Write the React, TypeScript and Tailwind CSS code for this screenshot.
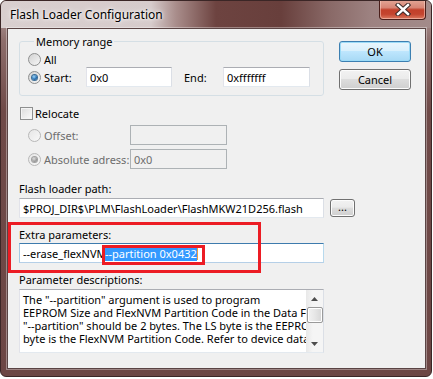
import React from "react";

function Radio({ checked, disabled }: { checked?: boolean; disabled?: boolean }) {
  return (
    <span
      className={
        "relative inline-block w-[13px] h-[13px] shrink-0 rounded-full border " +
        (disabled
          ? "border-[#b8b8b8] bg-[linear-gradient(135deg,#e6e6e6,#f8f8f8)]"
          : "border-[#8e8f8f] bg-[linear-gradient(135deg,#d2d2d2,#f6f6f6)]")
      }
    >
      {checked && !disabled && (
        <span className="absolute left-[3px] top-[3px] w-[5px] h-[5px] rounded-full bg-[radial-gradient(circle_at_40%_35%,#9fd8fa,#2a72b5_55%,#0d3f6f)] shadow-[0_0_0_1px_#3b6d96]" />
      )}
      {checked && disabled && (
        <span className="absolute left-[3px] top-[3px] w-[5px] h-[5px] rounded-full bg-[radial-gradient(circle_at_40%_35%,#e0e0e0,#9a9a9a_60%,#7a7a7a)] shadow-[0_0_0_1px_#a0a0a0]" />
      )}
    </span>
  );
}

function TextBox({
  children,
  width,
  disabled,
}: {
  children?: React.ReactNode;
  width: string;
  disabled?: boolean;
}) {
  return (
    <div
      className={
        width +
        " h-[20px] shrink-0 flex items-center pl-[3px] whitespace-nowrap overflow-hidden border " +
        (disabled
          ? "bg-[#f0f0f0] border-[#adb2b5] text-[#6d6d6d]"
          : "bg-white border-[#e2e3ea] border-t-[#abadb3] border-r-[#dbdfe6] border-b-[#e3e9ef] text-black")
      }
    >
      {children}
    </div>
  );
}

function Button({ children, className, def }: { children: React.ReactNode; className: string; def?: boolean }) {
  return (
    <div
      className={
        className +
        " flex items-center justify-center rounded-[3px] border " +
        (def
          ? "border-[#3c7fb1] bg-[linear-gradient(to_bottom,#eaf6fd_0%,#d9f0fc_45%,#bee6fd_50%,#a7d9f5_100%)] shadow-[inset_0_0_0_1px_#9cdbf7]"
          : "border-[#707070] bg-[linear-gradient(to_bottom,#f2f2f2_0%,#ebebeb_45%,#dddddd_50%,#cfcfcf_100%)] shadow-[inset_0_0_0_1px_#fcfcfc]")
      }
    >
      {children}
    </div>
  );
}

export default function App() {
  return (
    <div className="w-[433px] h-[379px] bg-white [font-family:'Noto_Sans','Liberation_Sans',sans-serif] text-[11px] leading-[15px] text-black">
      <div className="relative w-[432px] h-[377px] rounded-[6px] border border-[#3b2626] bg-[linear-gradient(to_bottom,#b9a6a5_0px,#8d6d6b_40px,#6f4a48_110px,#6c4644_100%)] flex flex-col pl-[6px] pr-[5px] pb-[7px] overflow-hidden">
        {/* title bar */}
        <div className="-ml-[6px] -mr-[5px] h-[27px] shrink-0 flex items-start bg-[linear-gradient(to_right,#d9cfcf_0px,#d6cbcb_150px,#a98d8b_175px,#6d4340_215px,#683f3c_280px,#8a6a68_330px,#9d8281_370px,#a38b8a_432px)] rounded-t-[5px]">
          <div className="pl-[9px] pt-[5px] text-[12px] leading-[17px] text-black [text-shadow:0_0_6px_#ffffff,0_0_3px_#ffffff]">
            Flash Loader Configuration
          </div>
          <div className="ml-auto mr-[5px] -mt-[1px] w-[47px] h-[20px] rounded-b-[4px] border border-t-0 border-[#4a1e1a] bg-[linear-gradient(to_bottom,#e3a797_0%,#d78575_40%,#c2402a_52%,#c4452f_75%,#dc7a60_100%)] shadow-[inset_0_0_0_1px_rgba(255,220,210,0.5)] flex items-center justify-center">
            <svg width="16" height="13" viewBox="0 0 16 13">
              <path d="M3 2 L13 11 M13 2 L3 11" stroke="#3b2a28" strokeWidth="4.4" strokeLinecap="square" fill="none" />
              <path d="M3 2 L13 11 M13 2 L3 11" stroke="#ffffff" strokeWidth="2.4" strokeLinecap="square" fill="none" />
            </svg>
          </div>
        </div>

        {/* client area */}
        <div className="flex-1 bg-[#f0f0f0] border border-[#5a4444] shadow-[0_0_0_1px_rgba(255,255,255,0.35)] flex flex-col pl-[11px] whitespace-nowrap">
          {/* top row */}
          <div className="flex mt-[5px]">
            <fieldset className="w-[305px] border border-[#d5dfe5] rounded-[3px] pl-[8px] pb-[8px] pt-[2px]">
              <legend className="ml-[6px] px-[2px] leading-[15px]">Memory range</legend>
              <div className="flex items-center h-[16px] gap-[3px]">
                <Radio />
                <span>All</span>
              </div>
              <div className="flex items-center h-[20px]">
                <Radio checked />
                <span className="ml-[3px] w-[42px]">Start:</span>
                <TextBox width="w-[86px]">0x0</TextBox>
                <span className="ml-[12px] w-[39px]">End:</span>
                <TextBox width="w-[87px]">0xfffffff</TextBox>
              </div>
            </fieldset>
            <div className="ml-[15px] mt-[7px] flex flex-col gap-[7px]">
              <Button className="w-[72px] h-[21px]" def>
                OK
              </Button>
              <Button className="w-[72px] h-[21px]">Cancel</Button>
            </div>
          </div>

          {/* relocate */}
          <div className="flex items-center h-[15px] mt-[10px] ml-[1px] gap-[2px]">
            <span className="w-[13px] h-[13px] border border-[#8e8f8f] bg-[linear-gradient(135deg,#dcdcdc,#fbfbfb)] shadow-[inset_0_0_0_1px_#f4f4f4]" />
            <span>Relocate</span>
          </div>
          <div className="flex items-center h-[20px] mt-[4px] ml-[9px] text-[#6d6d6d]">
            <Radio disabled />
            <span className="ml-[3px] w-[86px]">Offset:</span>
            <TextBox width="w-[97px]" disabled />
          </div>
          <div className="flex items-center h-[20px] mt-[4px] ml-[9px] text-[#6d6d6d]">
            <Radio disabled checked />
            <span className="ml-[3px] w-[86px]">Absolute adress:</span>
            <TextBox width="w-[97px]" disabled>
              0x0
            </TextBox>
          </div>

          <div className="mt-[12px] h-[15px]">Flash loader path:</div>
          <div className="flex items-start mt-[2px]">
            <TextBox width="w-[305px]">$PROJ_DIR$\PLM\FlashLoader\FlashMKW21D256.flash</TextBox>
            <Button className="ml-[6px] mt-[1px] w-[25px] h-[18px] text-[11px] leading-[10px] pb-[2px]">...</Button>
          </div>

          <div className="mt-[9px] h-[15px]">Extra parameters:</div>
          <div className="mt-[1px] w-[305px] h-[20px] flex items-center pl-[3px] whitespace-nowrap overflow-hidden bg-white border border-[#a4c9e3] border-t-[#3d7bad] border-r-[#b7d9ed] border-b-[#b5cfe7]">
            <span className="w-[81px] shrink-0 overflow-hidden">--erase_flexNVM</span>
            <span className="w-[93px] shrink-0 overflow-hidden bg-[#3399ff] text-white h-[15px] leading-[15px] pl-[1px]">--partition 0x0432</span>
            <span className="w-[1px] h-[14px] bg-[#f0a040]" />
          </div>

          <div className="mt-[9px] h-[15px]">Parameter descriptions:</div>
          <div className="mt-[2px] w-[305px] h-[64px] flex bg-white border border-[#e2e3ea] border-t-[#abadb3] border-r-[#dbdfe6] border-b-[#e3e9ef]">
            <div className="flex-1 overflow-hidden pl-[3px] pt-[3px] leading-[13px] whitespace-nowrap">
              <div>The "--partition" argument is used to program</div>
              <div>EEPROM Size and FlexNVM Partition Code in the Data Flash</div>
              <div>"--partition" should be 2 bytes. The LS byte is the EEPROM</div>
              <div>byte is the FlexNVM Partition Code. Refer to device data sheet</div>
            </div>
            <div className="w-[17px] shrink-0 bg-[linear-gradient(to_right,#e8e8e8,#f5f5f5_40%,#f5f5f5)] flex flex-col items-center">
              <div className="h-[17px] flex items-center justify-center">
                <svg width="7" height="4" viewBox="0 0 7 4">
                  <path d="M0 4 L3.5 0 L7 4 Z" fill="#4d4d4d" />
                </svg>
              </div>
              <div className="w-[16px] h-[16px] rounded-[2px] border border-[#9a9a9a] bg-[linear-gradient(to_right,#f3f3f3,#e6e6e6_50%,#d6d6d6)] shadow-[inset_0_0_0_1px_#ffffff]" />
              <div className="flex-1" />
              <div className="h-[17px] flex items-center justify-center">
                <svg width="7" height="4" viewBox="0 0 7 4">
                  <path d="M0 0 L7 0 L3.5 4 Z" fill="#4d4d4d" />
                </svg>
              </div>
            </div>
          </div>
        </div>

        {/* annotation boxes */}
        <div className="absolute left-[7px] top-[221px] w-[253px] h-[51px] border-[3px] border-[#ec1c24]" />
        <div className="absolute left-[101px] top-[244px] w-[103px] h-[20px] border-[3px] border-[#ec1c24]" />
      </div>
    </div>
  );
}
